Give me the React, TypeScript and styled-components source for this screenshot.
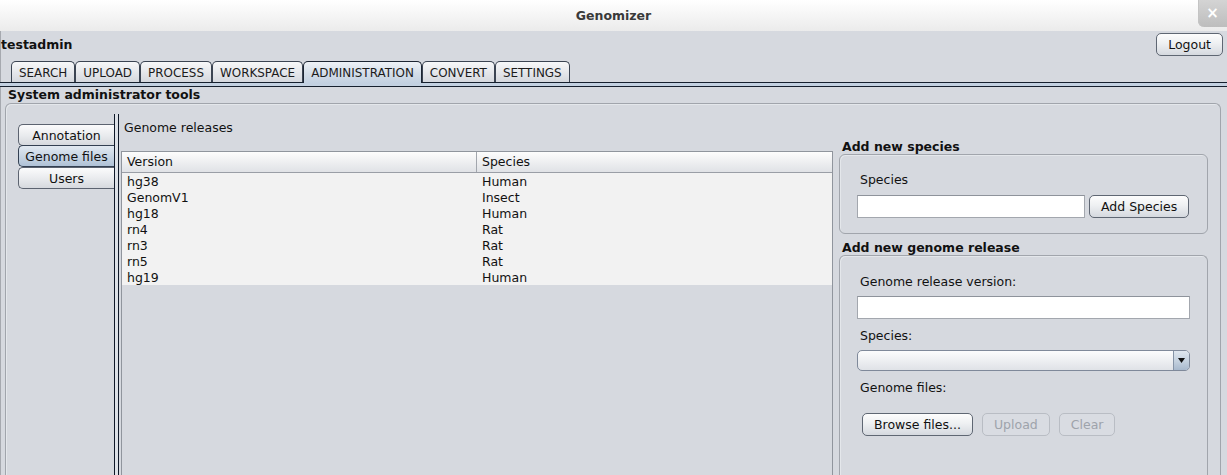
import React from 'react';
import styled, { createGlobalStyle, css } from 'styled-components';

const Global = createGlobalStyle`
  html, body { margin: 0; padding: 0; background: #d6d9df; overflow: hidden; }
  body {
    font-family: "DejaVu Sans", "Liberation Sans", sans-serif;
    font-size: 12.5px;
    color: #111;
  }
  * { box-sizing: border-box; }
`;

const Window = styled.div`
  width: 1227px;
  height: 475px;
  display: flex;
  flex-direction: column;
  overflow: hidden;
  background: #d6d9df;
`;

const TitleBar = styled.div`
  flex: none;
  height: 31px;
  display: grid;
  grid-template-columns: 1fr auto 1fr;
  align-items: start;
  background: linear-gradient(#ffffff, #ebebeb);
`;

const Title = styled.div`
  grid-column: 2;
  margin-top: 8px;
  line-height: 15px;
  font-weight: bold;
  color: #3a3a3a;
`;

const CloseButton = styled.div`
  grid-column: 3;
  justify-self: end;
  width: 29px;
  height: 27px;
  border-bottom-left-radius: 6px;
  background: linear-gradient(#d4d4d4, #bdbdbd);
  box-shadow: inset 1px 0 0 #c4c4c4;
  display: flex;
  align-items: center;
  justify-content: center;
  color: #ffffff;
  font-weight: bold;
  font-size: 15px;
  line-height: 15px;
`;

const Main = styled.div`
  flex: 1;
  min-height: 0;
  display: flex;
  flex-direction: column;
  box-shadow: inset 1px 0 0 #a6a9af;
`;

const UserRow = styled.div`
  flex: none;
  height: 30px;
  display: flex;
  justify-content: space-between;
  align-items: flex-start;
  padding: 2px 4px 0 1px;
`;

const UserName = styled.div`
  margin-top: 4px;
  line-height: 15px;
  font-weight: bold;
`;

const Button = styled.button<{ $disabled?: boolean }>`
  height: 23px;
  padding: 0 11px;
  border: 1px solid #5f6773;
  border-radius: 5px;
  background: linear-gradient(#fdfdfd 0%, #eef0f2 45%, #d5d9df 100%);
  font-family: inherit;
  font-size: 12.5px;
  line-height: 21px;
  color: #111;
  white-space: nowrap;
  ${(p) =>
    p.$disabled &&
    css`
      border-color: #b9bdc4;
      background: #d9dce2;
      color: #9ea3ab;
    `}
`;

const TabRow = styled.div`
  flex: none;
  height: 21px;
  display: flex;
  align-items: flex-end;
  padding-left: 11px;
`;

const Tab = styled.div<{ $selected?: boolean }>`
  height: 21px;
  padding: 1px 7px 0;
  border: 1px solid #3b4452;
  border-bottom: none;
  border-radius: 5px 5px 0 0;
  display: flex;
  align-items: center;
  font-size: 11.95px;
  color: #1b1b1b;
  background: linear-gradient(#f7f8f9 0%, #e4e6ea 55%, #d5d8de 100%);
  ${(p) =>
    p.$selected &&
    css`
      position: relative;
      z-index: 1;
      height: 22px;
      margin-bottom: -1px;
      padding-bottom: 1px;
      border-color: #1c2533;
      background: linear-gradient(#eef2f7 0%, #d3dde8 55%, #c3d1e1 100%);
    `}
`;

const TabBand = styled.div`
  flex: none;
  height: 5px;
  border-top: 1px solid #16202e;
  border-bottom: 1px solid #16202e;
  background: #c3d1e1;
`;

const SectionTitle = styled.div`
  flex: none;
  height: 16px;
  line-height: 15px;
  padding-left: 8px;
  font-weight: bold;
`;

const OuterPanel = styled.div`
  flex: 1;
  min-height: 0;
  margin: 0 6px 0 5px;
  border: 1px solid #a1a5ac;
  border-bottom: none;
  border-radius: 6px 6px 0 0;
  box-shadow: inset 1px 1px 0 #e4e7eb;
  display: flex;
  padding: 10px 12px 0 12px;
`;

const SideTabs = styled.div`
  flex: none;
  width: 96px;
  padding-top: 10px;
  display: flex;
  flex-direction: column;
`;

const SideTab = styled.div<{ $selected?: boolean }>`
  height: 22px;
  margin-top: -1px;
  &:first-child { margin-top: 0; }
  &:last-child { margin-top: 0; }
  border: 1px solid #5c6370;
  border-right: none;
  border-radius: 5px 0 0 5px;
  display: flex;
  align-items: center;
  justify-content: center;
  background: linear-gradient(#fbfbfc 0%, #e8eaed 55%, #d6d9de 100%);
  ${(p) =>
    p.$selected &&
    css`
      position: relative;
      border-color: #334052;
      background: linear-gradient(#e2e9f1 0%, #c6d4e3 55%, #afc1d6 100%);
    `}
`;

const Divider = styled.div`
  flex: none;
  width: 5px;
  border-left: 1px solid #0f1929;
  border-right: 1px solid #0f1929;
  background: #dde1e7;
`;

const Content = styled.div`
  flex: none;
  display: flex;
  padding-left: 2px;
`;

const LeftColumn = styled.div`
  flex: none;
  width: 712px;
  display: flex;
  flex-direction: column;
  padding-top: 6px;
`;

const PlainLabel = styled.div<{ $indent?: number }>`
  line-height: 15px;
  height: 16px;
  padding-left: ${(p) => p.$indent ?? 0}px;
`;

const TableFrame = styled.div`
  margin-top: 15px;
  flex: 1;
  border: 1px solid #90959d;
  border-bottom: none;
  background: #d6d9df;
  display: flex;
  flex-direction: column;
`;

const HeaderRow = styled.div`
  flex: none;
  height: 21px;
  display: grid;
  grid-template-columns: 355px 1fr;
  border-bottom: 1px solid #9a9ea6;
  background: linear-gradient(#fdfdfd 0%, #eeeff1 50%, #e0e2e6 100%);
`;

const HeaderCell = styled.div`
  padding-left: 5px;
  line-height: 20px;
  &:first-child { border-right: 1px solid #a2a6ad; }
`;

const DataRow = styled.div`
  height: 16px;
  display: grid;
  grid-template-columns: 355px 1fr;
  background: #f2f2f2;
`;

const DataCell = styled.div`
  padding: 1px 0 0 5px;
  line-height: 15px;
`;

const RightColumn = styled.div`
  flex: none;
  width: 369px;
  margin-left: 6px;
  padding-top: 25px;
  display: flex;
  flex-direction: column;
`;

const GroupTitle = styled.div<{ $gap?: number }>`
  height: 15px;
  line-height: 15px;
  padding-left: 3px;
  margin-top: ${(p) => p.$gap ?? 0}px;
  font-weight: bold;
`;

const GroupBox = styled.div<{ $open?: boolean }>`
  border: 1px solid #a1a5ac;
  border-radius: 6px;
  box-shadow: inset 1px 1px 0 #e4e7eb;
  padding: 17px 17px 15px;
  display: flex;
  flex-direction: column;
  ${(p) =>
    p.$open &&
    css`
      flex: 1;
      border-bottom: none;
      border-radius: 6px 6px 0 0;
    `}
`;

const FieldLabel = styled.div<{ $gap?: number }>`
  height: 16px;
  line-height: 16px;
  padding-left: 3px;
  margin-top: ${(p) => p.$gap ?? 0}px;
`;

const InlineRow = styled.div<{ $gap?: number; $spacing?: number; $indent?: number }>`
  display: flex;
  align-items: center;
  gap: ${(p) => p.$spacing ?? 4}px;
  margin-top: ${(p) => p.$gap ?? 0}px;
  padding-left: ${(p) => p.$indent ?? 0}px;
`;

const TextField = styled.div<{ $width?: number; $gap?: number }>`
  flex: none;
  height: 23px;
  width: ${(p) => (p.$width ? `${p.$width}px` : '100%')};
  margin-top: ${(p) => p.$gap ?? 0}px;
  background: #ffffff;
  border: 1px solid #a3a7ae;
  border-top-color: #8e939b;
`;

const Combo = styled.div`
  margin-top: 6px;
  height: 21px;
  display: flex;
  border: 1px solid #7f899a;
  border-radius: 5px;
  background: linear-gradient(#fcfcfd 0%, #eceef1 55%, #dfe2e7 100%);
  overflow: hidden;
`;

const ComboValue = styled.div`
  flex: 1;
`;

const ComboArrow = styled.div`
  flex: none;
  width: 16px;
  border-left: 1px solid #8593a6;
  background: linear-gradient(#dfe6ee 0%, #c3d0de 55%, #a8b9cd 100%);
  display: flex;
  align-items: center;
  justify-content: center;
`;

const versions: [string, string][] = [
  ['hg38', 'Human'],
  ['GenomV1', 'Insect'],
  ['hg18', 'Human'],
  ['rn4', 'Rat'],
  ['rn3', 'Rat'],
  ['rn5', 'Rat'],
  ['hg19', 'Human'],
];

const tabs = ['SEARCH', 'UPLOAD', 'PROCESS', 'WORKSPACE', 'ADMINISTRATION', 'CONVERT', 'SETTINGS'];

export default function App() {
  return (
    <>
      <Global />
      <Window>
        <TitleBar>
          <Title>Genomizer</Title>
          <CloseButton>×</CloseButton>
        </TitleBar>
        <Main>
          <UserRow>
            <UserName>testadmin</UserName>
            <Button>Logout</Button>
          </UserRow>
          <TabRow>
            {tabs.map((t) => (
              <Tab key={t} $selected={t === 'ADMINISTRATION'}>
                {t}
              </Tab>
            ))}
          </TabRow>
          <TabBand />
          <SectionTitle>System administrator tools</SectionTitle>
          <OuterPanel>
            <SideTabs>
              <SideTab>Annotation</SideTab>
              <SideTab $selected>Genome files</SideTab>
              <SideTab>Users</SideTab>
            </SideTabs>
            <Divider />
            <Content>
              <LeftColumn>
                <PlainLabel $indent={3}>Genome releases</PlainLabel>
                <TableFrame>
                  <HeaderRow>
                    <HeaderCell>Version</HeaderCell>
                    <HeaderCell>Species</HeaderCell>
                  </HeaderRow>
                  {versions.map(([v, s]) => (
                    <DataRow key={v}>
                      <DataCell>{v}</DataCell>
                      <DataCell>{s}</DataCell>
                    </DataRow>
                  ))}
                </TableFrame>
              </LeftColumn>
              <RightColumn>
                <GroupTitle>Add new species</GroupTitle>
                <GroupBox>
                  <FieldLabel>Species</FieldLabel>
                  <InlineRow $gap={7}>
                    <TextField $width={228} />
                    <Button>Add Species</Button>
                  </InlineRow>
                </GroupBox>
                <GroupTitle $gap={6}>Add new genome release</GroupTitle>
                <GroupBox $open>
                  <FieldLabel $gap={1}>Genome release version:</FieldLabel>
                  <TextField $gap={6} />
                  <FieldLabel $gap={9}>Species:</FieldLabel>
                  <Combo>
                    <ComboValue />
                    <ComboArrow>
                      <svg width="7" height="5" viewBox="0 0 7 5">
                        <path d="M0 0 H7 L3.5 5 Z" fill="#111" />
                      </svg>
                    </ComboArrow>
                  </Combo>
                  <FieldLabel $gap={9}>Genome files:</FieldLabel>
                  <InlineRow $gap={17} $spacing={9} $indent={5}>
                    <Button>Browse files...</Button>
                    <Button $disabled>Upload</Button>
                    <Button $disabled>Clear</Button>
                  </InlineRow>
                </GroupBox>
              </RightColumn>
            </Content>
          </OuterPanel>
        </Main>
      </Window>
    </>
  );
}
